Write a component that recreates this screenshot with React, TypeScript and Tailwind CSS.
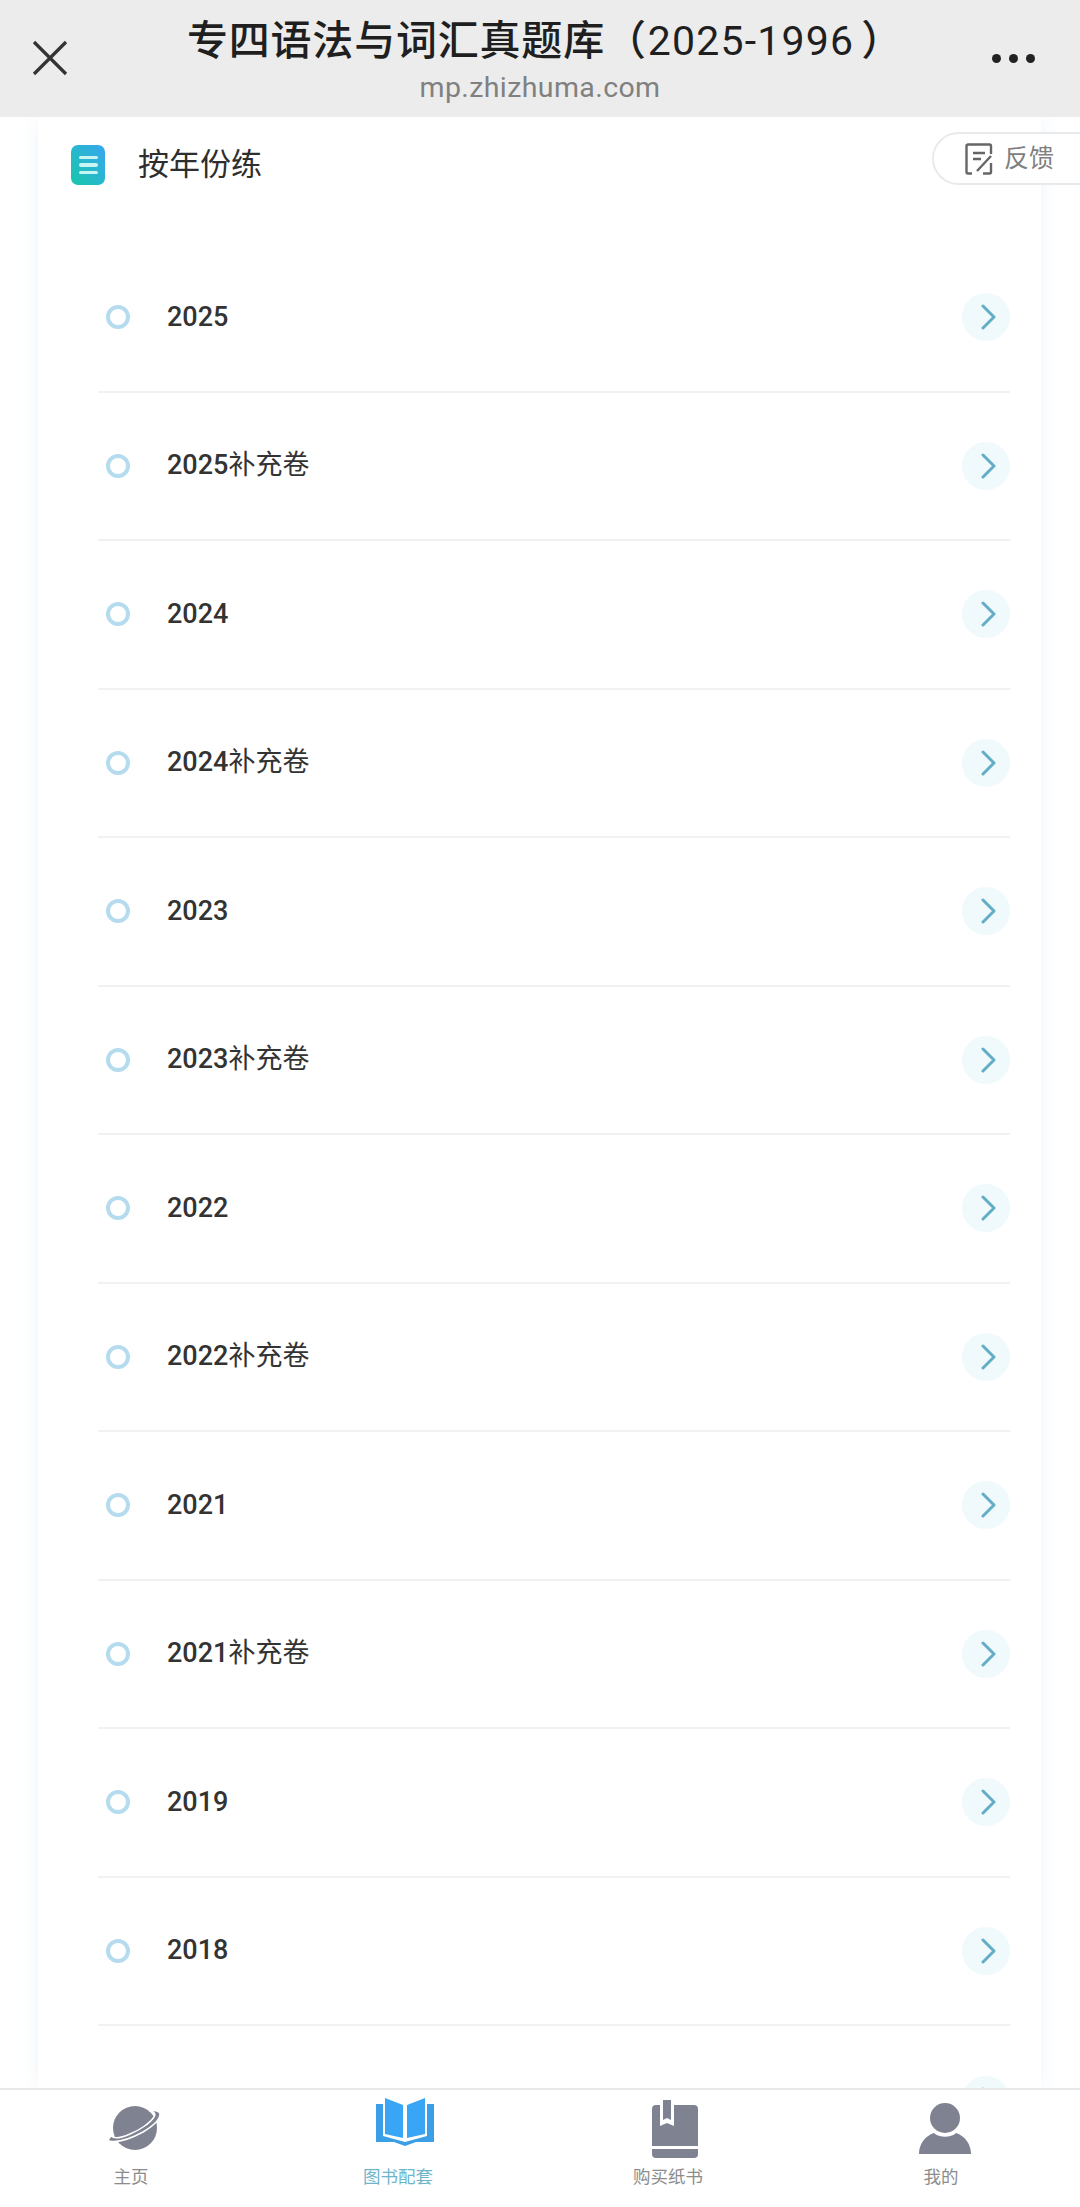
import React from "react";

const years = ["2025","2025补充卷","2024","2024补充卷","2023","2023补充卷","2022","2022补充卷","2021","2021补充卷","2019","2018",""];
const font = { fontFamily: '"Roboto","Noto Sans CJK SC",sans-serif' };

function Row({ label, last }: { label: string; last: boolean }) {
  const year = label.slice(0, 4);
  const rest = label.slice(4);
  return (
    <div className={"h-[148.5px] shrink-0 flex items-center " + (last ? "" : "border-b-2 border-[#f1f1f1]")}>
      <span className="w-6 h-6 rounded-full border-[4.5px] border-[#b4dbee] ml-[8px] bg-white shrink-0" />
      <span className="ml-[37px] text-[27px] text-[#333] flex-1 leading-none">
        <span className="font-medium">{year}</span>
        {rest}
      </span>
      <span className="w-12 h-12 rounded-full bg-[#f0f9fc] flex items-center justify-center shrink-0">
        <svg width="18" height="26" viewBox="0 0 18 26" fill="none" stroke="#63adc6" strokeWidth="3" strokeLinecap="round" strokeLinejoin="round" className="ml-[3px]">
          <path d="M4 2 L15 13 L4 24" />
        </svg>
      </span>
    </div>
  );
}

function NavItem({ label, active, iconClass, labelClass, children }: { label: string; active?: boolean; iconClass: string; labelClass: string; children: React.ReactNode }) {
  return (
    <div className="flex flex-col items-center">
      <div className="h-[58px] flex items-end justify-center">
        <div className={iconClass}>{children}</div>
      </div>
      <span className={"mt-[11px] text-[17.5px] leading-[24px] " + labelClass + " " + (active ? "text-[#6fb5ca]" : "text-[#8c8c8c]")}>{label}</span>
    </div>
  );
}

export default function App() {
  return (
    <div className="w-[1080px] h-[2207px] bg-white flex flex-col overflow-hidden relative" style={font}>
      <header className="h-[117px] shrink-0 bg-[#ececec] flex items-start relative z-10">
        <div className="w-[100px] h-[117px] shrink-0 flex items-center justify-center">
          <svg width="36" height="36" viewBox="0 0 36 36" fill="none" stroke="#333" strokeWidth="3.2" className="-mt-[1px]">
            <path d="M2 2 L34 34 M34 2 L2 34" />
          </svg>
        </div>
        <div className="flex-1 flex flex-col items-center pt-[15px]">
          <div className="text-[41px] leading-[52px] text-[#1f1f1f] font-medium tracking-[0.8px] whitespace-nowrap ml-[10px]">专四语法与词汇真题库（<span className="ml-[1px] mr-[7px] font-normal tracking-[1.2px]">2025-1996</span>）</div>
          <div className="text-[28.5px] leading-[34px] text-[#808080] tracking-[0.4px] mt-[4px]">mp.zhizhuma.com</div>
        </div>
        <div className="w-[100px] h-[117px] shrink-0 flex items-center justify-center gap-[8px] pr-[34px]">
          <span className="w-[9px] h-[9px] rounded-full bg-[#222]" />
          <span className="w-[9px] h-[9px] rounded-full bg-[#222]" />
          <span className="w-[9px] h-[9px] rounded-full bg-[#222]" />
        </div>
      </header>

      <main className="flex-1 min-h-0 overflow-hidden relative">
        <div className="ml-[38px] w-[1003px] h-full bg-white shadow-[0_0_20px_#eef4f9] flex flex-col">
          <div className="h-[127px] shrink-0 flex items-start pt-[28px] pl-[33px]">
            <span className="w-[34px] h-[40px] rounded-[7px] bg-gradient-to-tr from-[#18c6a8] to-[#38a5f0] flex flex-col items-center justify-center gap-[4px]">
              <i className="block w-[19px] h-[3.5px] rounded-full bg-[#c9f4f4]" />
              <i className="block w-[19px] h-[3.5px] rounded-full bg-[#c9f4f4]" />
              <i className="block w-[19px] h-[3.5px] rounded-full bg-[#c9f4f4]" />
            </span>
            <span className="ml-[33px] text-[31px] leading-[40px] text-[#2e2e2e]">按年份练</span>
          </div>
          <div className="flex flex-col shrink-0 ml-[60px] mr-[31px]">
            {years.map((y, i) => <Row key={i} label={y} last={i === years.length - 1} />)}
          </div>
        </div>

        <div className="absolute right-0 top-[15px] w-[148px] h-[53px] bg-white border-2 border-r-0 border-[#e8eaec] rounded-l-[27px] flex items-center pl-[31px]">
          <svg width="28" height="32" viewBox="0 0 28 32" fill="none" stroke="#666" strokeWidth="2.4">
            <path d="M26 11 V3 a1.5 1.5 0 0 0 -1.5 -1.5 H3 a1.5 1.5 0 0 0 -1.5 1.5 V29 a1.5 1.5 0 0 0 1.5 1.5 H7" />
            <path d="M18 30.5 H24.500 a1.500 1.500 0 0 0 1.500 -1.500 V20" />
            <path d="M8 10 H20 M8 16 H16 M12 28 L26 13" />
          </svg>
          <span className="ml-[11px] text-[25px] leading-none text-[#808080]">反馈</span>
        </div>
      </main>

      <nav className="h-[119px] shrink-0 bg-white border-t-2 border-[#e6e8ea] grid grid-cols-4 pt-[6px] relative z-10">
        <NavItem label="主页" iconClass="mb-[3px]" labelClass="pr-[8px]">
          <svg width="54" height="46" viewBox="0 0 54 46" fill="none" className="block">
            <circle cx="27" cy="23" r="22" fill="#7f8290" />
            <path d="M1 36 C 10 38 24 33 35 27 C 45 21 52 15 52 9 C 52 6 47 5 43 6 C 46 7 48 9 46 12 C 42 18 32 25 22 29 C 13 33 6 34 3 31 C 1 33 0 35 1 36 Z" fill="#7f8290" stroke="#fff" strokeWidth="1.5" />
          </svg>
        </NavItem>
        <NavItem label="图书配套" active iconClass="mb-[8px]" labelClass="pr-[14px]">
          <svg width="58" height="48" viewBox="0 0 58 48" className="block">
            <path d="M9 0 L27 7 V40 L9 36 Z" fill="#39a6f5" />
            <path d="M49 0 L31 7 V40 L49 36 Z" fill="#39a6f5" />
            <path d="M0 6 H7 V38 L29 44 L51 38 V6 H58 V44 H40 L29 48 L18 44 H0 Z" fill="#3a9fe6" />
          </svg>
        </NavItem>
        <NavItem label="购买纸书" iconClass="-mb-[4px]" labelClass="pr-[14px]">
          <svg width="46" height="58" viewBox="0 0 46 58" fill="#7f8290" className="block">
            <path d="M4 5 H8 V26 L15 23 L22 26 V5 H42 a4 4 0 0 1 4 4 V46 H0 V9 a4 4 0 0 1 4 -4 Z" />
            <path d="M11 0 H19 V20 L15 18 L11 20 Z" />
            <path d="M0 49 H46 V54 a4 4 0 0 1 -4 4 H4 a4 4 0 0 1 -4 -4 Z" />
          </svg>
        </NavItem>
        <NavItem label="我的" iconClass="" labelClass="pr-[8px]">
          <svg width="52" height="52" viewBox="0 0 52 52" fill="#7f8290" className="block">
            <circle cx="26" cy="16" r="15" />
            <path d="M0 52 C 0 42 6 34 15 31 C 20 36 32 36 37 31 C 46 34 52 42 52 52 Z" />
          </svg>
        </NavItem>
      </nav>
    </div>
  );
}
